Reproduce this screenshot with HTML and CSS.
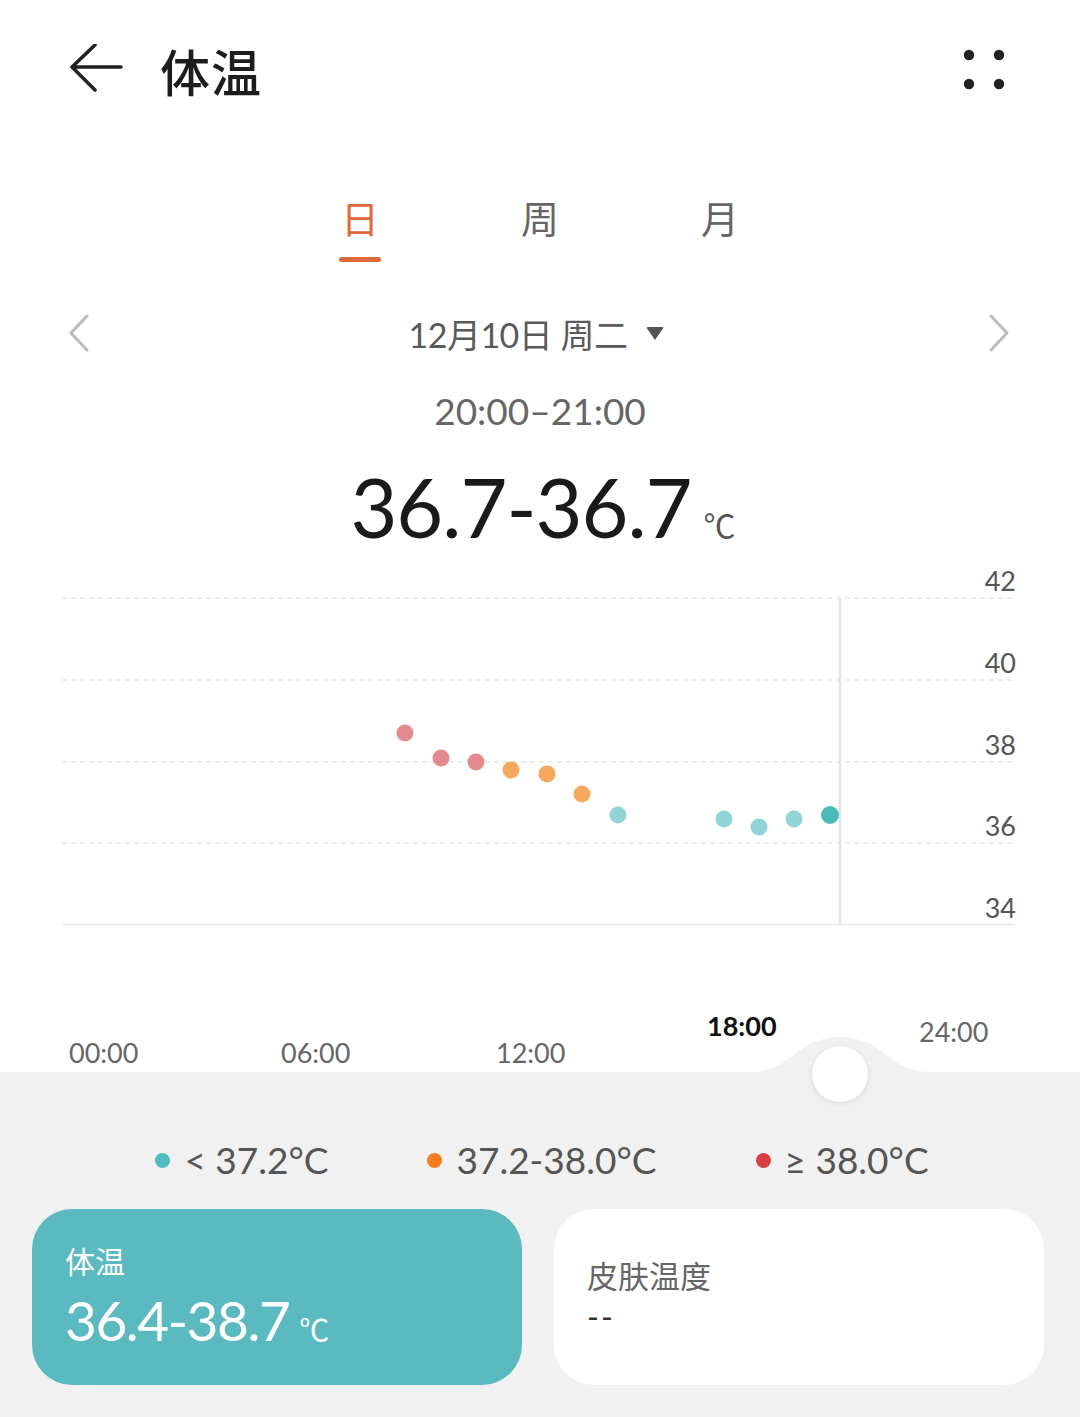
FILE: index.html
```html
<!DOCTYPE html>
<html lang="zh-CN">
<head>
    <meta charset="UTF-8">
    <meta name="viewport" content="width=device-width, initial-scale=1.0">
    <title>体温</title>
    <link rel="stylesheet" href="styles.css">
</head>
<body>
    <header class="topbar">
        <svg class="back" width="56" height="50" viewBox="0 0 56 50">
            <path d="M53 23H4M27 1L4 23L27 46" fill="none" stroke="#222" stroke-width="3.6" stroke-linecap="round" stroke-linejoin="round"/>
        </svg>
        <h1 class="title">体温</h1>
        <svg class="more" width="44" height="42" viewBox="0 0 44 42">
            <circle cx="6" cy="6" r="5.2" fill="#222"/>
            <circle cx="36" cy="6" r="5.2" fill="#222"/>
            <circle cx="6" cy="35" r="5.2" fill="#222"/>
            <circle cx="36" cy="35" r="5.2" fill="#222"/>
        </svg>
    </header>

    <nav class="tabs">
        <a class="tab active" href="#">日<span class="bar"></span></a>
        <a class="tab" href="#">周</a>
        <a class="tab" href="#">月</a>
    </nav>

    <div class="date-row">
        <svg width="26" height="38" viewBox="0 0 26 38">
            <path d="M21 2L5 19L21 36" fill="none" stroke="#bbb" stroke-width="3" stroke-linecap="round" stroke-linejoin="round"/>
        </svg>
        <div class="date">12月10日 周二 <span class="caret"></span></div>
        <svg width="26" height="38" viewBox="0 0 26 38">
            <path d="M5 2L21 19L5 36" fill="none" stroke="#bbb" stroke-width="3" stroke-linecap="round" stroke-linejoin="round"/>
        </svg>
    </div>

    <div class="range">20:00–21:00</div>
    <div class="value">36.7-36.7<span class="unit">℃</span></div>

    <svg class="chart" width="1080" height="550" viewBox="0 0 1080 550">
        <defs>
            <filter id="knob-shadow" x="-50%" y="-50%" width="200%" height="200%">
                <feDropShadow dx="0" dy="1" stdDeviation="2.5" flood-color="#000" flood-opacity="0.12"/>
            </filter>
        </defs>
        <g stroke="#e6e6e6" stroke-width="1.4" stroke-dasharray="5 4">
            <line x1="62" y1="38" x2="1015" y2="38"/>
            <line x1="62" y1="120" x2="1015" y2="120"/>
            <line x1="62" y1="202" x2="1015" y2="202"/>
            <line x1="62" y1="283" x2="1015" y2="283"/>
        </g>
        <line x1="62" y1="364.5" x2="1015" y2="364.5" stroke="#e8e8e8" stroke-width="1.5"/>
        <line x1="840" y1="38" x2="840" y2="364" stroke="#e2e2e2" stroke-width="2.5"/>

        <g class="ylab" text-anchor="end">
            <text x="1016" y="31">42</text>
            <text x="1016" y="113">40</text>
            <text x="1016" y="195">38</text>
            <text x="1016" y="276">36</text>
            <text x="1016" y="358">34</text>
        </g>

        <g fill="#e38a8f">
            <circle cx="405" cy="173" r="8.5"/>
            <circle cx="441" cy="198" r="8.5"/>
            <circle cx="476" cy="202" r="8.5"/>
        </g>
        <g fill="#f6a85e">
            <circle cx="511" cy="210" r="8.5"/>
            <circle cx="547" cy="214" r="8.5"/>
            <circle cx="582" cy="234" r="8.5"/>
        </g>
        <g fill="#90d4d8">
            <circle cx="618" cy="255" r="8.5"/>
            <circle cx="724" cy="259" r="8.5"/>
            <circle cx="759" cy="267" r="8.5"/>
            <circle cx="794" cy="259" r="8.5"/>
        </g>
        <circle cx="830" cy="255" r="9" fill="#4cbab9"/>

        <g class="xlab">
            <text x="69" y="503">00:00</text>
            <text x="281" y="503">06:00</text>
            <text x="496" y="503">12:00</text>
            <text x="707" y="476" class="now">18:00</text>
            <text x="919" y="482">24:00</text>
        </g>

        <path d="M0 512H752C790 512 798 477 840 477C882 477 890 512 928 512H1080V550H0Z" fill="#f1f1f1"/>
        <circle cx="840" cy="514" r="28" fill="#fff" filter="url(#knob-shadow)"/>
    </svg>

    <section class="panel">
        <div class="legend">
            <span class="item"><i class="dot teal"></i>&lt; 37.2°C</span>
            <span class="item"><i class="dot orange"></i>37.2-38.0°C</span>
            <span class="item"><i class="dot red"></i>≥ 38.0°C</span>
        </div>
        <div class="cards">
            <div class="card selected">
                <div class="card-title">体温</div>
                <div class="card-value">36.4-38.7<span class="card-unit">℃</span></div>
            </div>
            <div class="card">
                <div class="card-title">皮肤温度</div>
                <div class="card-value empty">--</div>
            </div>
        </div>
    </section>
</body>
</html>
```

FILE: styles.css
```css
body {
    margin: 0;
    width: 1080px;
    height: 1417px;
    overflow: hidden;
    background: #fff;
    font-family: Lato, "Noto Sans CJK SC", sans-serif;
    color: #222;
}
.topbar {
    height: 140px;
    display: flex;
    align-items: center;
    padding: 0 73px 0 68px;
}
.back {
    display: block;
    margin-top: -2px;
}
.title {
    margin: 0 0 0 36px;
    font-family: "Noto Sans CJK SC", sans-serif;
    font-size: 50px;
    font-weight: 500;
    color: #1d1d1d;
    letter-spacing: 1px;
}
.more {
    margin-left: auto;
    margin-top: -1px;
}
.tabs {
    margin-top: 40px;
    display: flex;
    justify-content: center;
}
.tab {
    width: 180px;
    height: 82px;
    display: flex;
    flex-direction: column;
    align-items: center;
    font-family: "Noto Sans CJK SC", sans-serif;
    font-size: 38px;
    line-height: 74px;
    color: #666;
    text-decoration: none;
}
.tab.active {
    color: #df6a3c;
}
.tab .bar {
    width: 42px;
    height: 5px;
    border-radius: 3px;
    background: #df6a3c;
    margin-top: 3px;
}
.date-row {
    margin-top: 36px;
    height: 70px;
    display: flex;
    align-items: center;
    justify-content: space-between;
    padding: 0 68px 0 66px;
}
.date {
    font-size: 34px;
    color: #5a5a5a;
    display: flex;
    align-items: center;
    font-family: Lato, "Noto Sans CJK SC", sans-serif;
    margin-left: -6px;
    letter-spacing: -0.5px;
}
.caret {
    width: 0;
    height: 0;
    margin-left: 18px;
    border-left: 9px solid transparent;
    border-right: 9px solid transparent;
    border-top: 13px solid #555;
    border-radius: 2px;
}
.range {
    margin-top: 18px;
    text-align: center;
    font-size: 37px;
    line-height: 50px;
    color: #666;
}
.value {
    margin-top: 36px;
    height: 70px;
    line-height: 70px;
    text-align: center;
    font-size: 81px;
    color: #1a1a1a;
    letter-spacing: -1px;
    padding-left: 6px;
}
.unit {
    font-size: 32px;
    color: #555;
    margin-left: 12px;
    letter-spacing: 0;
}
.chart {
    display: block;
    margin-top: 18px;
}
.ylab text {
    font-family: Lato, sans-serif;
    font-size: 27px;
    fill: #555;
}
.xlab text {
    font-family: Lato, sans-serif;
    font-size: 27px;
    fill: #666;
}
.xlab .now {
    fill: #111;
    font-weight: 700;
}
.panel {
    background: #f1f1f1;
    height: 307px;
    padding-top: 25px;
    box-sizing: border-box;
}
.legend {
    display: flex;
    justify-content: center;
    gap: 99px;
    padding-left: 4px;
    font-size: 37px;
    line-height: 50px;
    color: #555;
}
.item {
    display: flex;
    align-items: center;
}
.dot {
    width: 15px;
    height: 15px;
    border-radius: 50%;
    margin-right: 14px;
}
.dot.teal { background: #4ebcc5; }
.dot.orange { background: #f57c1f; }
.dot.red { background: #d83f40; }
.cards {
    margin-top: 24px;
    display: flex;
    gap: 32px;
    padding: 0 36px 0 32px;
}
.card {
    flex: 1;
    height: 176px;
    box-sizing: border-box;
    border-radius: 40px;
    background: #fff;
    padding: 46px 33px 0;
}
.card-title {
    font-family: "Noto Sans CJK SC", sans-serif;
    font-size: 31px;
    line-height: 40px;
    color: #666;
}
.card-value.empty {
    margin-top: 7px;
    font-size: 32px;
    line-height: 30px;
    color: #333;
    letter-spacing: 2px;
}
.card.selected {
    background: #5bbabf;
    padding-top: 31px;
}
.card.selected .card-title {
    color: #fff;
    font-size: 30px;
}
.card.selected .card-value {
    margin-top: 8px;
    font-size: 55px;
    line-height: 64px;
    color: #fff;
    letter-spacing: -1.5px;
}
.card-unit {
    font-size: 30px;
    margin-left: 10px;
    letter-spacing: 0;
}
```
